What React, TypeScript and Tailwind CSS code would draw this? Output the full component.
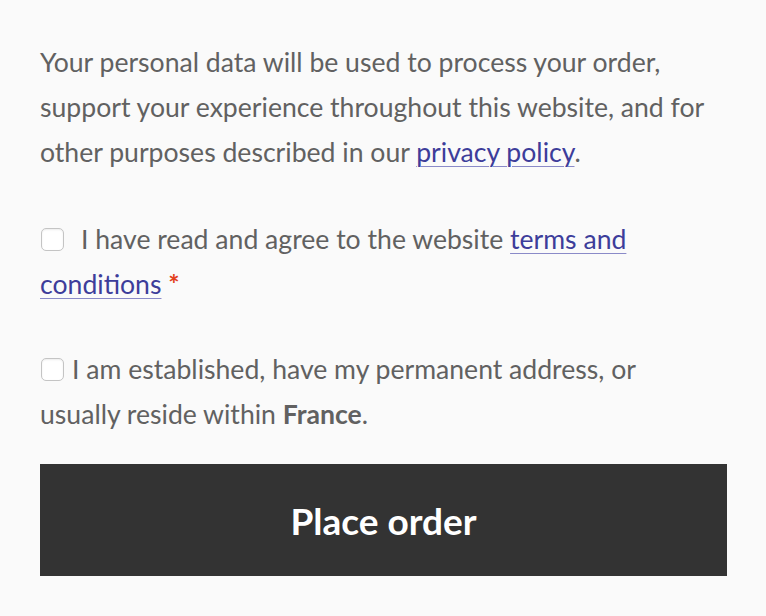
import React from "react";

function Box({ className }: { className: string }) {
  return (
    <span
      className={
        "inline-block h-[23px] w-[23px] rounded-[5px] border border-[#c4c4c4] bg-white align-middle shadow-[inset_0_1px_2px_rgba(0,0,0,0.08)] " +
        className
      }
    />
  );
}

export default function App() {
  return (
    <div className="min-h-screen bg-[#fafafa] px-10 pt-10 font-['Lato',sans-serif] text-[26.6px] leading-[45px] text-[#616161]">
      <div className="w-[687px] whitespace-nowrap">
        <p className="mb-[41.5px]">
          Your personal data will be used to process your order,
          <br />
          support your experience throughout this website, and for
          <br />
          other purposes described in our{" "}
          <a href="#" className="text-[#3d3d9a] underline decoration-[#8a8ac8] decoration-1 underline-offset-[4px]">
            privacy policy
          </a>
          .
        </p>
        <p className="mb-[40px]">
          <Box className="relative -top-[2px] ml-px mr-[17px]" />I have read and agree to the website{" "}
          <a href="#" className="text-[#3d3d9a] underline decoration-[#8a8ac8] decoration-1 underline-offset-[4px]">
            terms and
            <br />
            conditions
          </a>{" "}
          <abbr className="font-bold text-[#e2401c] no-underline" title="required">
            *
          </abbr>
        </p>
        <p className="mb-[27.5px]">
          <Box className="relative -top-[2px] ml-px mr-[8px]" />I am established, have my permanent address, or
          <br />
          usually reside within <strong className="font-bold">France</strong>.
        </p>
        <button className="flex h-[112px] w-full items-center justify-center bg-[#333333] font-['Lato',sans-serif] text-[37px] font-bold text-white">
          Place order
        </button>
      </div>
    </div>
  );
}
